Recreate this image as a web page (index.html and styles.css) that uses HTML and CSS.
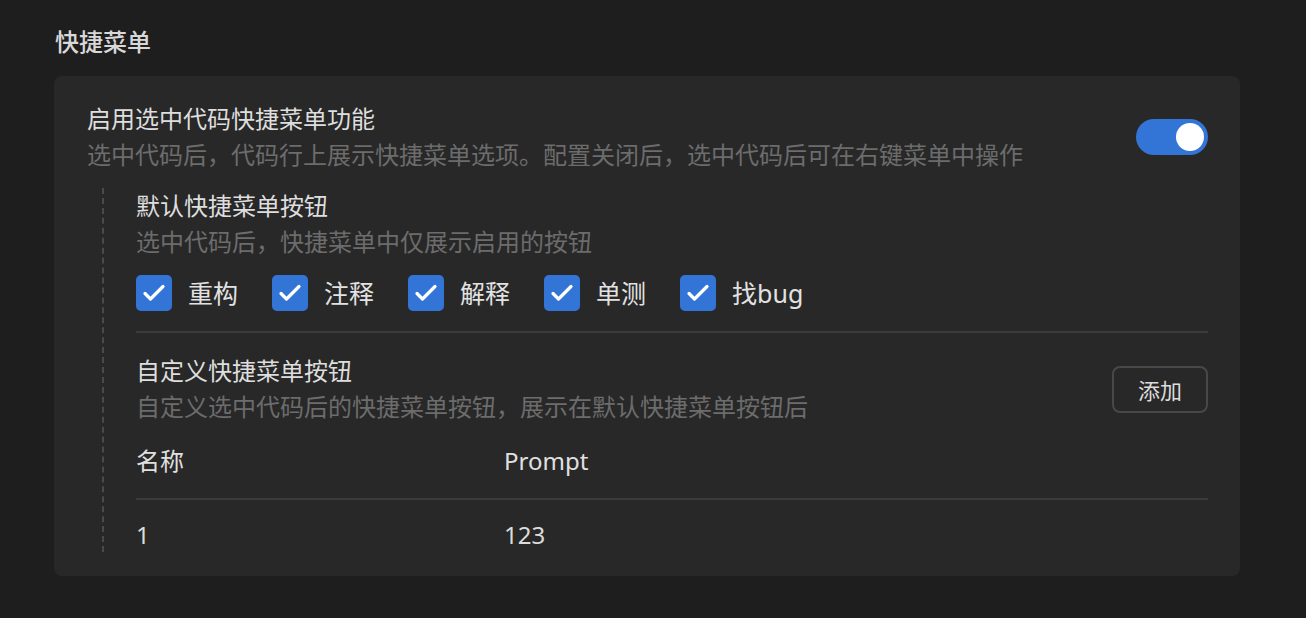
FILE: index.html
```html
<!DOCTYPE html>
<html lang="zh-CN">
<head>
    <meta charset="UTF-8">
    <title>快捷菜单</title>
    <link rel="stylesheet" href="styles.css">
</head>
<body>
    <div class="page">
        <h2 class="section-title">快捷菜单</h2>

        <div class="card">
            <div class="setting-row">
                <div class="setting-text">
                    <div class="setting-label">启用选中代码快捷菜单功能</div>
                    <div class="setting-desc">选中代码后，代码行上展示快捷菜单选项。配置关闭后，选中代码后可在右键菜单中操作</div>
                </div>
                <button class="switch on" aria-label="toggle"><span class="knob"></span></button>
            </div>

            <div class="sub-settings">
                <div class="setting-label">默认快捷菜单按钮</div>
                <div class="setting-desc">选中代码后，快捷菜单中仅展示启用的按钮</div>

                <div class="checkbox-group">
                    <label class="checkbox"><span class="box"><svg viewBox="0 0 36 36"><path d="M9 18.5l5.5 5.5L27 11.5"/></svg></span>重构</label>
                    <label class="checkbox"><span class="box"><svg viewBox="0 0 36 36"><path d="M9 18.5l5.5 5.5L27 11.5"/></svg></span>注释</label>
                    <label class="checkbox"><span class="box"><svg viewBox="0 0 36 36"><path d="M9 18.5l5.5 5.5L27 11.5"/></svg></span>解释</label>
                    <label class="checkbox"><span class="box"><svg viewBox="0 0 36 36"><path d="M9 18.5l5.5 5.5L27 11.5"/></svg></span>单测</label>
                    <label class="checkbox"><span class="box"><svg viewBox="0 0 36 36"><path d="M9 18.5l5.5 5.5L27 11.5"/></svg></span>找bug</label>
                </div>

                <div class="divider"></div>

                <div class="setting-row">
                    <div class="setting-text">
                        <div class="setting-label">自定义快捷菜单按钮</div>
                        <div class="setting-desc">自定义选中代码后的快捷菜单按钮，展示在默认快捷菜单按钮后</div>
                    </div>
                    <button class="btn">添加</button>
                </div>

                <div class="table">
                    <div class="table-head">
                        <div class="cell">名称</div>
                        <div class="cell">Prompt</div>
                    </div>
                    <div class="table-row">
                        <div class="cell">1</div>
                        <div class="cell">123</div>
                    </div>
                </div>
            </div>
        </div>
    </div>
</body>
</html>
```

FILE: styles.css
```css
* {
    box-sizing: border-box;
    margin: 0;
    padding: 0;
}

body {
    background-color: #1e1e1e;
    color: #dcdcdc;
    font-family: "Noto Sans", "Noto Sans CJK SC", sans-serif;
    font-size: 24px;
    line-height: 36px;
}

.page {
    padding: 24px 66px 0 54px;
}

.section-title {
    font-size: 24px;
    font-weight: 500;
    line-height: 36px;
    color: #d8d8d8;
    margin-bottom: 16px;
    padding-left: 1px;
}

.card {
    background-color: #282828;
    border-radius: 8px;
    padding: 25px 32px 24px 33px;
}

.setting-row {
    display: flex;
    align-items: center;
    justify-content: space-between;
}

.setting-label {
    color: #dedede;
}

.setting-desc {
    color: #6c6c6c;
}

.switch {
    width: 72px;
    height: 36px;
    border: none;
    border-radius: 18px;
    background-color: #3375d6;
    display: flex;
    align-items: center;
    justify-content: flex-end;
    padding: 0 4px;
    cursor: pointer;
}

.switch .knob {
    width: 28px;
    height: 28px;
    border-radius: 50%;
    background-color: #fff;
}

.sub-settings {
    margin-top: 15px;
    margin-left: 15px;
    border-left: 2px dashed #4a4a4a;
    padding-left: 32px;
}

.checkbox-group {
    display: flex;
    margin-top: 15px;
}

.checkbox {
    display: flex;
    align-items: center;
    gap: 16px;
    margin-right: 34px;
    font-size: 25px;
    color: #e2e2e2;
}

.checkbox .box {
    width: 36px;
    height: 36px;
    border-radius: 5px;
    background-color: #3375d6;
    display: flex;
}

.checkbox svg {
    width: 36px;
    height: 36px;
    fill: none;
    stroke: #fff;
    stroke-width: 3.2;
    stroke-linecap: round;
    stroke-linejoin: round;
}

.divider {
    height: 2px;
    background-color: #3b3b3b;
    margin: 20px 0;
}

.btn {
    width: 96px;
    height: 47px;
    border: 2px solid #484848;
    border-radius: 8px;
    background: transparent;
    color: #dcdcdc;
    font-family: inherit;
    font-size: 22px;
    cursor: pointer;
}

.table-head,
.table-row {
    display: grid;
    grid-template-columns: 368px 1fr;
}

.table-head {
    padding: 18px 0 19px;
    border-bottom: 2px solid #3b3b3b;
    color: #e0e0e0;
}

.table-row {
    padding-top: 18px;
    line-height: 34px;
    color: #dcdcdc;
}
```
